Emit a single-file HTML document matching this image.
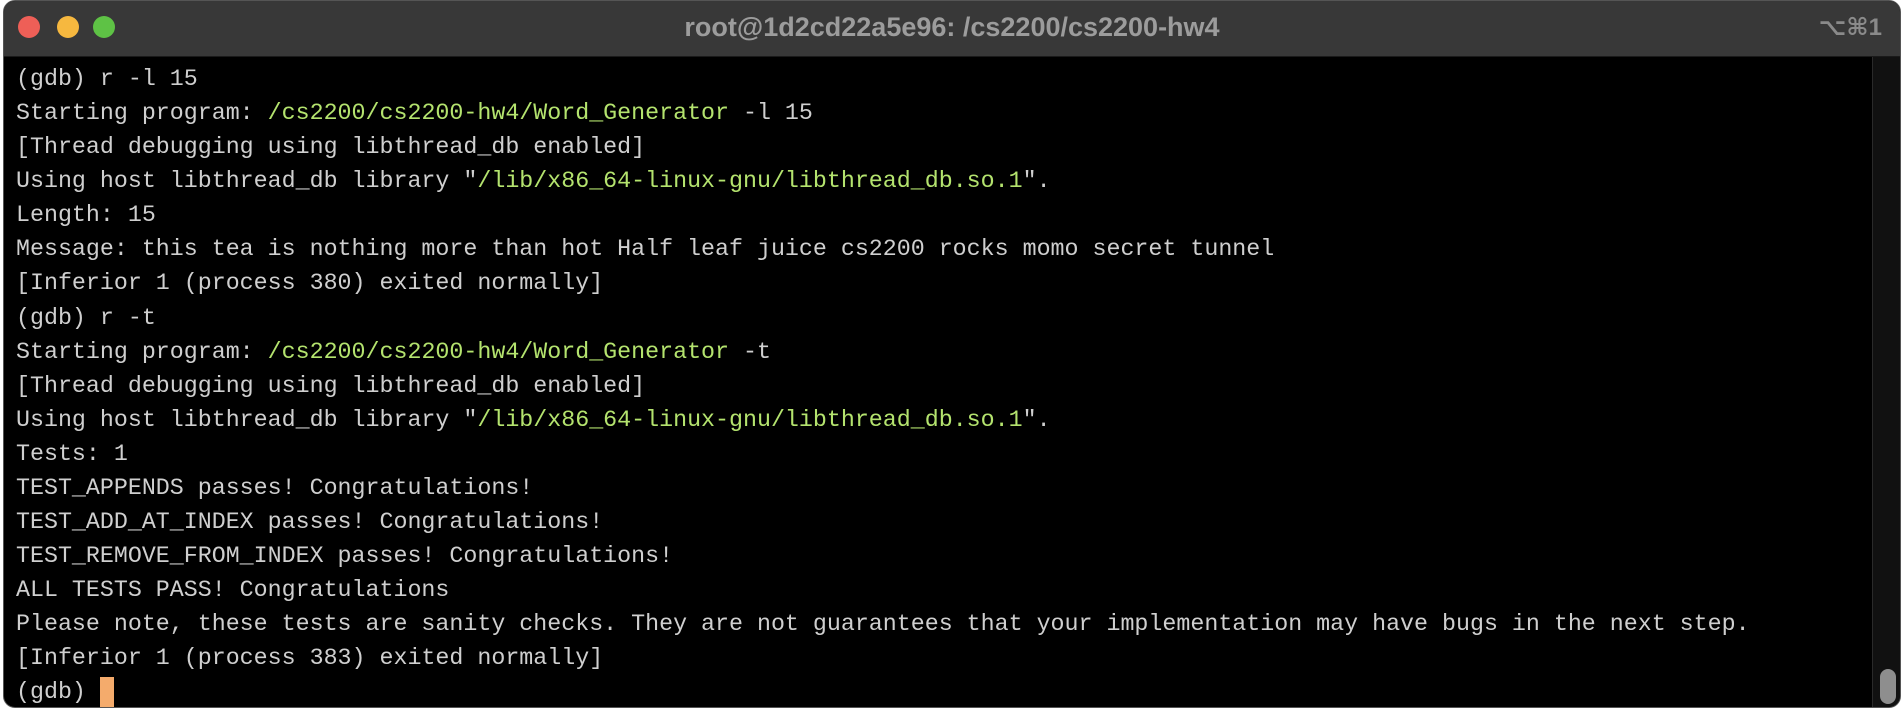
<!DOCTYPE html>
<html><head><meta charset="utf-8"><style>
html,body{margin:0;padding:0;width:1904px;height:710px;background:#fff;overflow:hidden}
.win{position:absolute;left:3px;top:0;width:1898px;height:708px;background:#000;border:1px solid #555;border-radius:12px;overflow:hidden;box-sizing:border-box}
.tb{position:absolute;left:0;top:0;right:0;height:55px;background:#383838;border-bottom:1px solid #1a1a1a}
.dot{position:absolute;top:15px;width:22px;height:22px;border-radius:50%}
.title{position:absolute;left:0;right:0;top:11px;text-align:center;font:bold 27px "Liberation Sans",sans-serif;color:#9c9c9c}
.sc{position:absolute;right:18px;top:12px;font:bold 24px "Liberation Sans","DejaVu Sans",sans-serif;color:#8a8a8a}
.term{position:absolute;left:12px;top:61px;font:23.3px/34.08px "Liberation Mono",monospace;color:#cfcfcf;white-space:pre}
.g{color:#b4e36e}
.cur{display:inline-block;width:14px;height:32px;background:#f4ab6c;vertical-align:top;margin-top:2px}
.track{position:absolute;left:1868px;top:56px;width:30px;height:652px;background:#111;border-left:1px solid #2a2a2a}
.thumb{position:absolute;left:1876px;top:668px;width:16px;height:35px;border-radius:8px;background:#8e8e8e}
</style></head><body>
<div class="win">
<div class="tb">
<div class="dot" style="left:14px;background:#ee5f57"></div>
<div class="dot" style="left:53px;background:#f6b83f"></div>
<div class="dot" style="left:89px;background:#5ec245"></div>
<div class="title">root@1d2cd22a5e96: /cs2200/cs2200-hw4</div>
<div class="sc">⌥⌘1</div>
</div>
<div class="track"></div>
<div class="thumb"></div>
<div class="term">(gdb) r -l 15
Starting program: <span class="g">/cs2200/cs2200-hw4/Word_Generator</span> -l 15
[Thread debugging using libthread_db enabled]
Using host libthread_db library "<span class="g">/lib/x86_64-linux-gnu/libthread_db.so.1</span>".
Length: 15
Message: this tea is nothing more than hot Half leaf juice cs2200 rocks momo secret tunnel
[Inferior 1 (process 380) exited normally]
(gdb) r -t
Starting program: <span class="g">/cs2200/cs2200-hw4/Word_Generator</span> -t
[Thread debugging using libthread_db enabled]
Using host libthread_db library "<span class="g">/lib/x86_64-linux-gnu/libthread_db.so.1</span>".
Tests: 1
TEST_APPENDS passes! Congratulations!
TEST_ADD_AT_INDEX passes! Congratulations!
TEST_REMOVE_FROM_INDEX passes! Congratulations!
ALL TESTS PASS! Congratulations
Please note, these tests are sanity checks. They are not guarantees that your implementation may have bugs in the next step.
[Inferior 1 (process 383) exited normally]
(gdb) <span class="cur"></span></div>
</div>
</body></html>
